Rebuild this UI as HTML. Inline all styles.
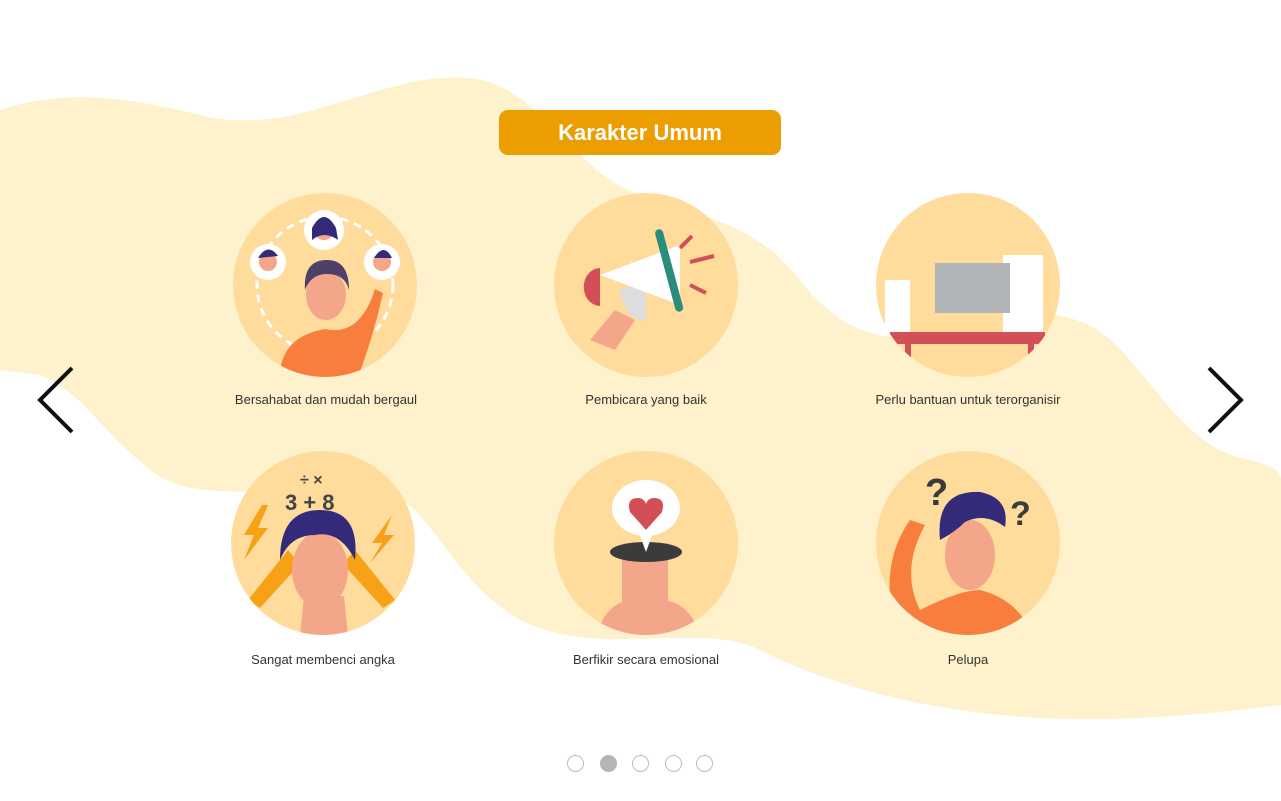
<!DOCTYPE html>
<html><head><meta charset="utf-8"><style>
body{margin:0;width:1281px;height:801px;background:#fff;position:relative;overflow:hidden;font-family:"Liberation Sans",sans-serif}
.t{position:absolute;left:499px;top:110px;width:282px;height:45px;background:#ec9d00;border-radius:9px;color:#fff;font-weight:bold;font-size:22px;text-align:center;line-height:45px}
.l{position:absolute;width:300px;text-align:center;font-size:13px;color:#333}
.d{position:absolute;top:755px;width:17px;height:17px;border:1px solid #bbb;border-radius:50%;box-sizing:border-box}
</style></head><body>
<svg width="1281" height="801" style="position:absolute;left:0;top:0">
<defs>
<clipPath id="c1"><circle cx="325" cy="285" r="92"/></clipPath>
<clipPath id="c2"><circle cx="646" cy="285" r="92"/></clipPath>
<clipPath id="c3"><circle cx="968" cy="285" r="92"/></clipPath>
<clipPath id="c4"><circle cx="323" cy="543" r="92"/></clipPath>
<clipPath id="c5"><circle cx="646" cy="543" r="92"/></clipPath>
<clipPath id="c6"><circle cx="968" cy="543" r="92"/></clipPath>
</defs>
<path d="M0 110 C60 90 120 95 200 115 C300 140 380 70 470 78 C540 85 570 170 640 195 C720 220 760 230 800 280 C840 330 880 350 960 330 C1030 310 1080 300 1130 360 C1180 420 1200 450 1250 460 C1270 465 1281 470 1281 480 L1281 705 C1200 715 1100 725 1000 715 C900 705 820 680 760 650 C700 620 600 660 520 620 C450 580 430 500 380 490 C300 480 200 510 150 470 C100 430 80 390 40 375 L0 370 Z" fill="#fef2cc"/>
<g fill="#ffdb9c">
<circle cx="325" cy="285" r="92"/><circle cx="646" cy="285" r="92"/><circle cx="968" cy="285" r="92"/>
<circle cx="323" cy="543" r="92"/><circle cx="646" cy="543" r="92"/><circle cx="968" cy="543" r="92"/>
</g>
<g clip-path="url(#c1)">
<circle cx="325" cy="285" r="68" fill="none" stroke="#fff" stroke-width="3" stroke-dasharray="8 6"/>
<circle cx="268" cy="262" r="18" fill="#fff"/><circle cx="324" cy="230" r="20" fill="#fff"/><circle cx="382" cy="262" r="18" fill="#fff"/>
<circle cx="268" cy="262" r="9" fill="#f4a68a"/><circle cx="324" cy="230" r="10" fill="#f4a68a"/><circle cx="382" cy="262" r="9" fill="#f4a68a"/>
<path d="M258 258 q10 -16 20 -2 z M312 228 q12 -22 24 0 l2 12 q-14 -10 -26 0 z M374 258 q10 -16 18 0z" fill="#332b7a"/>
<path d="M280 377 q0 -40 45 -48 q35 8 50 -40 l8 4 q-10 45 -25 84 z" fill="#f77e3d"/>
<ellipse cx="326" cy="295" rx="20" ry="25" fill="#f4a68a"/>
<path d="M305 290 q-2 -30 22 -30 q22 0 22 30 q-4 -16 -22 -16 q-16 0 -22 16z" fill="#4e4069"/>
</g>
<g clip-path="url(#c2)">
<path d="M590 340 l25 -30 l20 10 l-20 30 z" fill="#f4a68a"/>
<path d="M618 290 l28 -8 l0 40 l-16 -6 z" fill="#ddd"/>
<path d="M600 275 l80 -30 l0 60 z" fill="#fff"/>
<path d="M600 268 a12 14 0 0 0 0 38 z" fill="#d24f57"/>
<rect x="665" y="228" width="8" height="85" rx="4" transform="rotate(-15 669 270)" fill="#2c8c7c"/>
<path d="M680 248 l12 -12 M690 262 l24 -6 M690 285 l16 8" stroke="#d24f57" stroke-width="4"/>
</g>
<g clip-path="url(#c3)">
<rect x="885" y="280" width="25" height="55" fill="#fff"/><rect x="1003" y="255" width="40" height="80" fill="#fff"/>
<rect x="935" y="263" width="75" height="50" fill="#b1b4b6"/>
<rect x="890" y="332" width="155" height="12" fill="#d24f57"/>
<rect x="905" y="344" width="6" height="14" fill="#d24f57"/><rect x="1028" y="344" width="6" height="14" fill="#d24f57"/>
</g>
<g clip-path="url(#c4)">
<path d="M300 636 l4 -40 h40 l4 40z" fill="#f4a68a"/>
<path d="M248 600 l40 -50 l12 14 l-40 44z M395 600 l-40 -50 l-12 14 l40 44z" fill="#f7a116"/>
<ellipse cx="320" cy="570" rx="28" ry="38" fill="#f4a68a"/>
<path d="M280 560 q0 -50 40 -50 q40 0 35 50 q-15 -30 -40 -25 q-25 0 -35 25z" fill="#332b7a"/>
<path d="M262 505 l-18 30 h10 l-10 25 l24 -32 h-10 l10 -23z M392 515 l-20 28 h10 l-12 20 l24 -28 h-10 l8 -20z" fill="#f7a116"/>
<text x="285" y="510" font-size="22" font-weight="bold" fill="#444">3 + 8</text>
<text x="300" y="485" font-size="16" font-weight="bold" fill="#444">÷ ×</text>
</g>
<g clip-path="url(#c5)">
<path d="M595 640 q10 -40 40 -40 h25 q30 0 42 40z" fill="#f4a68a"/>
<rect x="622" y="555" width="46" height="55" fill="#f4a68a"/>
<ellipse cx="646" cy="552" rx="36" ry="10" fill="#3b3b3b"/>
<ellipse cx="646" cy="508" rx="34" ry="28" fill="#fff"/><path d="M638 530 l8 22 l8 -22z" fill="#fff"/>
<path d="M646 530 l-16 -18 q-4 -14 8 -14 q6 0 8 6 q2 -6 8 -6 q12 0 8 14z" fill="#d24f57"/>
</g>
<g clip-path="url(#c6)">
<path d="M900 640 q-25 -70 10 -120 l15 5 q-25 45 -5 85 q40 -20 60 -20 q40 10 55 50z" fill="#f77e3d"/>
<ellipse cx="970" cy="555" rx="25" ry="35" fill="#f4a68a"/>
<path d="M940 540 q-5 -50 40 -48 q30 6 25 35 q-20 -15 -40 -5 q-10 10 -25 18z" fill="#332b7a"/>
</g>
<text x="925" y="505" font-size="38" font-weight="bold" fill="#3b3b3b">?</text>
<text x="1010" y="525" font-size="34" font-weight="bold" fill="#3b3b3b">?</text>
<path d="M72 368 L40 400 L72 432" fill="none" stroke="#111" stroke-width="4"/>
<path d="M1209 368 L1241 400 L1209 432" fill="none" stroke="#111" stroke-width="4"/>
</svg>
<div class="t">Karakter Umum</div>
<div class="l" style="left:176px;top:392px">Bersahabat dan mudah bergaul</div>
<div class="l" style="left:496px;top:392px">Pembicara yang baik</div>
<div class="l" style="left:818px;top:392px">Perlu bantuan untuk terorganisir</div>
<div class="l" style="left:173px;top:652px">Sangat membenci angka</div>
<div class="l" style="left:496px;top:652px">Berfikir secara emosional</div>
<div class="l" style="left:818px;top:652px">Pelupa</div>
<div class="d" style="left:567px"></div>
<div class="d" style="left:600px;background:#b4b6b6;border-color:#b4b6b6"></div>
<div class="d" style="left:632px"></div>
<div class="d" style="left:665px"></div>
<div class="d" style="left:696px"></div>
</body></html>
